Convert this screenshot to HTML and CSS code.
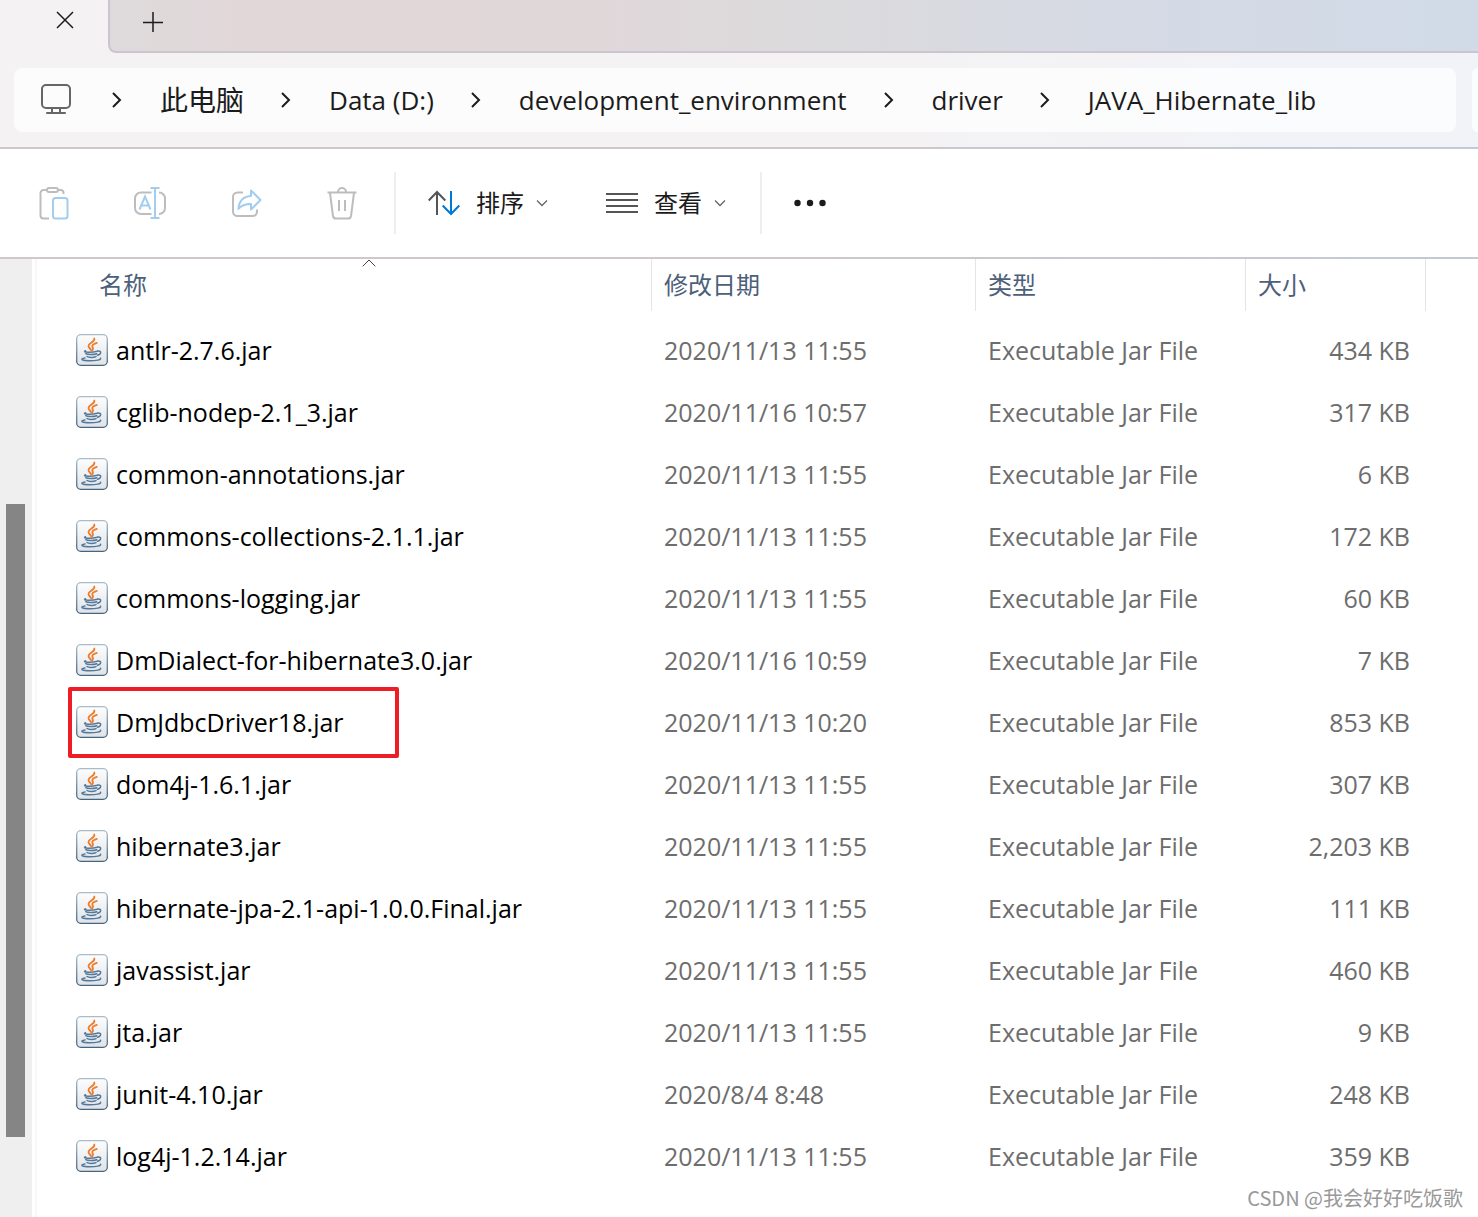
FILE: index.html
```html
<!DOCTYPE html>
<html lang="zh-CN">
<head>
<meta charset="utf-8">
<meta name="viewport" content="width=device-width, initial-scale=1">
<title>JAVA_Hibernate_lib</title>
<link rel="stylesheet" href="styles.css">
</head>
<body>
<svg class="sprite" aria-hidden="true">
  <defs>
    <linearGradient id="tile" x1="0" y1="0" x2="0" y2="1"><stop offset="0" stop-color="#fdfdfd"/><stop offset="1" stop-color="#dfe3e8"/></linearGradient>
    <linearGradient id="edge" x1="0" y1="0" x2="0" y2="1"><stop offset="0" stop-color="#a9bccb"/><stop offset="1" stop-color="#46657f"/></linearGradient>
  </defs>
  <symbol id="jar" viewBox="0 0 32 32">
    <rect x=".7" y=".7" width="30.6" height="30.6" rx="4" fill="url(#tile)" stroke="url(#edge)" stroke-width="1.3"/>
    <g fill="none" stroke="#ee7d2b" stroke-linecap="round" stroke-width="1.8">
      <path d="M18.3 4.500c1.2 3.300-5.800 4.500-5.800 7.500 0 1.800 1.900 2.300 2.600 4.200"/>
      <path d="M20.800 8.800c-2.500.8-4.800 2-4.500 3.600.2 1.300 1.600 1.900.2 3.700"/>
    </g>
    <g fill="none" stroke="#55799a" stroke-linecap="round" stroke-width="1.500">
      <path d="M9.500 16.800c-4 1.600 6 2 12 .4M9.800 19.700c1.500 1.200 8 1.200 11 .1M11 22.500c1.500 1.200 6.500 1.200 9 .1"/>
      <path d="M22 17c3.800-.5 3.400 3.200-.5 4.300"/>
      <path d="M9 24c-6 1.100-2.500 2.700 4.500 2.800 6.500 0 12-.9 11-2.600"/>
    </g>
  </symbol>
  <symbol id="chev" viewBox="0 0 10 18"><path d="M1 2l7 7-7 7" fill="none" stroke="#1b1b1b" stroke-width="2"/></symbol>
  <symbol id="down" viewBox="0 0 12 8"><path d="M1 1.500l5 5 5-5" fill="none" stroke="#666" stroke-width="1.300"/></symbol>
</svg>

<header>
  <div class="tabs">
    <div class="tab">
      <button class="plain" aria-label="关闭标签页"><svg width="18" height="18" viewBox="0 0 18 18"><path d="M1 1l16 16M17 1L1 17" stroke="#1b1b1b" stroke-width="1.500"/></svg></button>
    </div>
    <div class="strip">
      <button class="plain" aria-label="新建标签页"><svg width="20" height="20" viewBox="0 0 20 20"><path d="M0 10.500h20M10 0v20" stroke="#1b1b1b" stroke-width="1.500"/></svg></button>
    </div>
  </div>
  <div class="address-row">
    <nav class="address" aria-label="地址栏">
      <svg class="pc" width="32" height="32" viewBox="0 0 32 32" fill="none" stroke="#666" stroke-width="2"><rect x="2" y="1" width="28" height="23" rx="4"/><path d="M12 24v5M20 24v5M7 29h18" stroke-linecap="round"/></svg>
      <svg class="chev"><use href="#chev"/></svg><a href="#">此电脑</a>
      <svg class="chev"><use href="#chev"/></svg><a href="#">Data (D:)</a>
      <svg class="chev"><use href="#chev"/></svg><a href="#">development_environment</a>
      <svg class="chev"><use href="#chev"/></svg><a href="#">driver</a>
      <svg class="chev"><use href="#chev"/></svg><a href="#">JAVA_Hibernate_lib</a>
    </nav>
    <div class="search"></div>
  </div>
</header>

<div class="toolbar" role="toolbar">
  <button class="tool" aria-label="粘贴" disabled><svg width="32" height="36" viewBox="0 0 32 36" fill="none" stroke="#bdbdbd" stroke-width="2"><path d="M11 33.500H5.500a3 3 0 0 1-3-3V8a3 3 0 0 1 3-3H9M20 5h3a3 3 0 0 1 2.500 3v1"/><rect x="9" y="3" width="11" height="4" rx="2"/><rect x="15" y="13" width="14.500" height="20.500" rx="2.500" stroke="#a0cdf0"/></svg></button>
  <button class="tool" aria-label="重命名" disabled><svg width="34" height="36" viewBox="0 0 34 36" fill="none" stroke="#bdbdbd" stroke-width="2"><path d="M18.500 29H8a6 6 0 0 1-6-6v-9.500a6 6 0 0 1 6-6h10.500M26 7.500a6 6 0 0 1 6 6V23a6 6 0 0 1-6 6"/><g stroke="#a0cdf0"><path d="M6.500 24.500l5.500-13 5.500 13M8.500 20.500h7"/><path d="M22 3v30M17.500 3h9M17.500 33h9"/></g></svg></button>
  <button class="tool" aria-label="共享" disabled><svg width="32" height="36" viewBox="0 0 32 36" fill="none" stroke="#bdbdbd" stroke-width="2"><path d="M13 7.500H7.500a4.500 4.500 0 0 0-4.500 4.500v14.500A4.500 4.500 0 0 0 7.500 31h15a4.500 4.500 0 0 0 4.500-4.500v-2"/><path d="M21 5.500l9.500 9.500-9.500 9.500V19c-6 0-9.500 1-12.500 5 .5-8 4.500-12.500 12.500-13z" stroke="#a0cdf0" stroke-linejoin="round"/></svg></button>
  <button class="tool" aria-label="删除" disabled><svg width="32" height="36" viewBox="0 0 32 36" fill="none" stroke="#bdbdbd" stroke-width="2"><path d="M1.500 7.500h29M12 7a4 4 0 0 1 8 0M4 8l3 23a3 3 0 0 0 3 2.500h12a3 3 0 0 0 3-2.500L28 8M13 15v11M19 15v11"/></svg></button>
  <span class="rule first"></span>
  <button class="menu"><svg width="32" height="28" viewBox="0 0 32 28" fill="none" stroke-width="2"><path d="M9 26V3M.7 11.500L9 3l8.300 8.500" stroke="#555"/><path d="M23 2v23M14.700 16.500L23 25l8.300-8.500" stroke="#0078d4"/></svg><span>排序</span><svg class="down"><use href="#down"/></svg></button>
  <button class="menu view"><svg width="32" height="22" viewBox="0 0 32 22"><path d="M0 2h32M0 8h32M0 14h32M0 20h32" stroke="#555" stroke-width="2"/></svg><span>查看</span><svg class="down"><use href="#down"/></svg></button>
  <span class="rule"></span>
  <button class="menu" aria-label="更多"><svg width="32" height="8" viewBox="0 0 32 8" fill="#1b1b1b"><circle cx="3.500" cy="4" r="3.200"/><circle cx="16" cy="4" r="3.200"/><circle cx="28.500" cy="4" r="3.200"/></svg></button>
</div>

<main>
  <div class="scroll"><div class="thumb"></div></div>
  <div class="files">
    <table>
      <colgroup><col class="c-name"><col class="c-date"><col class="c-type"><col class="c-size"><col></colgroup>
      <thead><tr>
        <th class="name"><div>名称<svg class="sort" width="14" height="8" viewBox="0 0 14 8"><path d="M.7 7.300L7 1l6.300 6.300" fill="none" stroke="#444"/></svg></div></th>
        <th><div>修改日期</div></th><th><div>类型</div></th><th><div>大小</div></th><th></th>
      </tr></thead>
      <tbody>
        <tr><td><span class="file"><svg><use href="#jar"/></svg>antlr-2.7.6.jar</span></td><td>2020/11/13 11:55</td><td>Executable Jar File</td><td>434 KB</td><td></td></tr>
        <tr><td><span class="file"><svg><use href="#jar"/></svg>cglib-nodep-2.1_3.jar</span></td><td>2020/11/16 10:57</td><td>Executable Jar File</td><td>317 KB</td><td></td></tr>
        <tr><td><span class="file"><svg><use href="#jar"/></svg>common-annotations.jar</span></td><td>2020/11/13 11:55</td><td>Executable Jar File</td><td>6 KB</td><td></td></tr>
        <tr><td><span class="file"><svg><use href="#jar"/></svg>commons-collections-2.1.1.jar</span></td><td>2020/11/13 11:55</td><td>Executable Jar File</td><td>172 KB</td><td></td></tr>
        <tr><td><span class="file"><svg><use href="#jar"/></svg>commons-logging.jar</span></td><td>2020/11/13 11:55</td><td>Executable Jar File</td><td>60 KB</td><td></td></tr>
        <tr><td><span class="file"><svg><use href="#jar"/></svg>DmDialect-for-hibernate3.0.jar</span></td><td>2020/11/16 10:59</td><td>Executable Jar File</td><td>7 KB</td><td></td></tr>
        <tr><td><span class="file marked"><svg><use href="#jar"/></svg>DmJdbcDriver18.jar</span></td><td>2020/11/13 10:20</td><td>Executable Jar File</td><td>853 KB</td><td></td></tr>
        <tr><td><span class="file"><svg><use href="#jar"/></svg>dom4j-1.6.1.jar</span></td><td>2020/11/13 11:55</td><td>Executable Jar File</td><td>307 KB</td><td></td></tr>
        <tr><td><span class="file"><svg><use href="#jar"/></svg>hibernate3.jar</span></td><td>2020/11/13 11:55</td><td>Executable Jar File</td><td>2,203 KB</td><td></td></tr>
        <tr><td><span class="file"><svg><use href="#jar"/></svg>hibernate-jpa-2.1-api-1.0.0.Final.jar</span></td><td>2020/11/13 11:55</td><td>Executable Jar File</td><td>111 KB</td><td></td></tr>
        <tr><td><span class="file"><svg><use href="#jar"/></svg>javassist.jar</span></td><td>2020/11/13 11:55</td><td>Executable Jar File</td><td>460 KB</td><td></td></tr>
        <tr><td><span class="file"><svg><use href="#jar"/></svg>jta.jar</span></td><td>2020/11/13 11:55</td><td>Executable Jar File</td><td>9 KB</td><td></td></tr>
        <tr><td><span class="file"><svg><use href="#jar"/></svg>junit-4.10.jar</span></td><td>2020/8/4 8:48</td><td>Executable Jar File</td><td>248 KB</td><td></td></tr>
        <tr><td><span class="file"><svg><use href="#jar"/></svg>log4j-1.2.14.jar</span></td><td>2020/11/13 11:55</td><td>Executable Jar File</td><td>359 KB</td><td></td></tr>
      </tbody>
    </table>
  </div>
  <div class="watermark">CSDN @我会好好吃饭歌</div>
</main>
</body>
</html>
```
FILE: styles.css
```css
*, *::after { box-sizing: border-box; }
body {
  margin: 0;
  min-height: 100vh;
  display: flex;
  flex-direction: column;
  background: #fff;
  color: #1b1b1b;
  font: 24px/32px "Open Sans", "Noto Sans CJK SC", sans-serif;
}
svg { display: block; flex: none; }
button { border: 0; padding: 0; background: none; color: inherit; font: inherit; }
.plain { display: block; }
.sprite { position: absolute; width: 0; height: 0; }

header {
  background: linear-gradient(90deg, #f4f2f3 60%, #f2f3f8 85%);
  border-bottom: 2px solid;
  border-image: linear-gradient(90deg, #cfc7ca 50%, #c3cad4) 1;
}
.tabs { display: flex; height: 53px; }
.tab { width: 108px; padding: 11px 0 0 56px; }
.strip {
  flex: 1;
  padding: 12px 0 0 33px;
  border: solid #cbc6ce;
  border-width: 0 0 2px 2px;
  border-bottom-left-radius: 8px;
  background: linear-gradient(90deg, #dedadb, #e1d7d9 10%, #e0d7d9 35%, #dcdadc 50%, #d5dae5 75%, #d1dbe8);
}
.address-row { display: flex; gap: 16px; padding: 15px 0 15px 14px; }
.address {
  flex: 1;
  display: flex;
  align-items: center;
  height: 64px;
  padding-left: 26px;
  border-radius: 8px;
  background: linear-gradient(90deg, #fcfcfc 60%, #fbfcfe);
  font-size: 26px;
  white-space: nowrap;
}
.address a { color: inherit; text-decoration: none; }
.chev { width: 10px; height: 18px; margin: 0 38px 0 37px; }
.pc + .chev { margin-left: 40px; }
.address a:nth-of-type(1) { font-size: 28px; }
.search { width: 6px; border-radius: 8px 0 0 8px; background: #fbfcfe; }

.toolbar {
  display: flex;
  align-items: center;
  height: 110px;
  padding-left: 22px;
  border-bottom: 2px solid;
  border-image: linear-gradient(90deg, #cfc7ca 50%, #c3cad4) 1;
}
.tool { display: flex; justify-content: center; width: 64px; margin-right: 32px; }
.rule { width: 2px; height: 62px; margin-right: 32px; background: #eee; }
.rule.first { margin-left: -12px; }
.menu { display: flex; align-items: center; gap: 16px; }
.down { width: 12px; height: 8px; margin-left: -4px; }
.view { margin: 0 34px 0 58px; }

main { flex: 1; display: flex; position: relative; }
.scroll { width: 32px; padding: 245px 7px 80px 6px; background: #efefef; }
.thumb { height: 100%; background: #858585; }
.files { flex: 1; margin-left: 3px; border-left: 2px solid #f7f7f7; }
table { width: 100%; table-layout: fixed; border-collapse: collapse; }
.c-name { width: 615px; }
.c-date { width: 324px; }
.c-type { width: 270px; }
.c-size { width: 180px; }
th { height: 60px; padding: 0; vertical-align: top; text-align: left; font-weight: 400; color: #4c607a; }
th div { height: 52px; padding: 10px 12px; border-right: 1px solid #e5e5e5; }
.name div { position: relative; margin-left: 50px; }
.sort { position: absolute; top: 0; left: 50%; margin-left: -7px; }
td { height: 62px; padding: 0 12px; font-size: 25px; color: #6d6d6d; white-space: nowrap; }
td:first-child { padding: 0 0 0 31px; color: #000; }
td:nth-child(4) { padding-right: 16px; text-align: right; }
.file { display: flex; align-items: center; gap: 8px; padding-left: 8px; }
.file svg { width: 32px; height: 32px; }
.marked { position: relative; }
.marked::after {
  content: "";
  position: absolute;
  top: -19px;
  left: 0;
  width: 331px;
  height: 71px;
  border: 4px solid #ee1c25;
  border-radius: 2px;
}
.watermark {
  position: absolute;
  right: 15px;
  bottom: 4px;
  font: 20px/30px "Noto Sans CJK SC", sans-serif;
  color: #999;
}
```
